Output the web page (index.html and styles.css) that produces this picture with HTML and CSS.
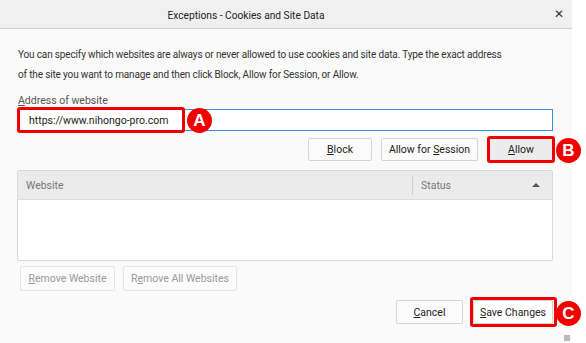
FILE: index.html
```html
<!DOCTYPE html>
<html lang="en">
<head>
  <meta charset="UTF-8">
  <title>Exceptions - Cookies and Site Data</title>
  <link rel="stylesheet" href="styles.css">
</head>
<body>

  <div class="dialog">
    <!-- Title bar -->
    <div class="titlebar">
      <span class="title">Exceptions - Cookies and Site Data</span>
      <span class="close">&#x2715;</span>
    </div>

    <div class="content">
      <p class="intro">You can specify which websites are always or never allowed to use cookies and site data. Type the exact address<br>of the site you want to manage and then click Block, Allow for Session, or Allow.</p>

      <label class="label" for="url"><u>A</u>ddress of website</label>
      <div class="url-field">
        <input id="url" class="url" type="text" value="https://www.nihongo-pro.com">
        <span class="mark mark-a"></span>
        <span class="badge badge-a">A</span>
      </div>

      <!-- Permission buttons -->
      <div class="actions">
        <button class="btn btn-block"><u>B</u>lock</button>
        <button class="btn btn-session">Allow for <u>S</u>ession</button>
        <div class="marked">
          <button class="btn btn-allow"><u>A</u>llow</button>
          <span class="mark mark-b"></span>
          <span class="badge badge-b">B</span>
        </div>
      </div>

      <!-- Site list -->
      <div class="sites">
        <div class="sites-head">
          <span class="col-site">Website</span>
          <span class="col-status">Status</span>
          <span class="sort"></span>
        </div>
        <div class="sites-body"></div>
      </div>

      <div class="remove-row">
        <button class="btn btn-off btn-remove"><u>R</u>emove Website</button>
        <button class="btn btn-off btn-remove-all">R<u>e</u>move All Websites</button>
      </div>

      <!-- Dialog footer -->
      <div class="footer">
        <button class="btn btn-cancel"><u>C</u>ancel</button>
        <div class="marked">
          <button class="btn btn-save"><u>S</u>ave Changes</button>
          <span class="mark mark-c"></span>
          <span class="badge badge-c">C</span>
        </div>
      </div>
    </div>

    <span class="grip"></span>
  </div>

</body>
</html>
```

FILE: styles.css
```css
/* Basic page styles */
body, html {
  margin: 0;
  padding: 0;
  background-color: #ffffff;
  font-family: Roboto, "Open Sans", sans-serif;
  color: #333;
}

/* Dialog window */
.dialog {
  position: relative;
  width: 572px;
  height: 343px;
  background-color: #fafafa;
}

.titlebar {
  height: 28px;
  display: flex;
  align-items: center;
  justify-content: center;
  background-color: #f0f0f0;
  border-bottom: 1px solid #cfcfcf;
  position: relative;
}

.title {
  font-size: 10.2px;
  color: #222;
  margin-left: -80px;
  margin-top: 3px;
}

.close {
  position: absolute;
  right: 8px;
  top: 7px;
  font-size: 12px;
  color: #333;
}

.content {
  padding: 16px 19px 0 17px;
}

.intro {
  margin: 0 0 0 1px;
  font-size: 10px;
  letter-spacing: -0.15px;
  line-height: 20px;
  color: #333;
  white-space: nowrap;
}

.label {
  display: block;
  margin: 9px 0 0 1px;
  font-size: 10.5px;
  line-height: 14px;
  color: #555;
}

/* Address input */
.url-field {
  position: relative;
  margin-top: 1px;
  height: 22px;
}

.url {
  display: block;
  box-sizing: border-box;
  width: 100%;
  height: 22px;
  border: 1px solid #3d8fe0;
  background-color: #fff;
  padding: 0 11px;
  font-family: inherit;
  font-size: 10.5px;
  color: #222;
  outline: none;
}

/* Red highlight boxes */
.mark {
  position: absolute;
  border: 3px solid #f20000;
  border-radius: 3px;
  box-sizing: border-box;
}

.mark-a {
  left: 0;
  top: -2px;
  width: 168px;
  height: 26px;
}

.mark-b {
  left: -2px;
  top: -2px;
  width: 68px;
  height: 27px;
}

.mark-c {
  left: -3px;
  top: -3px;
  width: 87px;
  height: 30px;
}

.badge {
  position: absolute;
  width: 25px;
  height: 25px;
  border-radius: 50%;
  background-color: #f20000;
  color: #fff;
  font-family: "Liberation Sans", Arial, sans-serif;
  font-weight: bold;
  font-size: 17px;
  line-height: 25px;
  text-align: center;
}

.badge-a {
  left: 170px;
  top: -1px;
}

.badge-b {
  left: 67px;
  top: 0;
}

.badge-c {
  left: 83px;
  top: 1px;
}

/* Buttons */
.btn {
  display: block;
  box-sizing: border-box;
  height: 23px;
  padding: 0 4px;
  white-space: nowrap;
  background-color: #fbfbfb;
  border: 1px solid #d4d4d4;
  border-radius: 2px;
  font-family: inherit;
  font-size: 10.5px;
  color: #222;
}

.btn-off {
  color: #9a9a9a;
  border-color: #e4e4e4;
  height: 25px;
}

.marked {
  position: relative;
}

.actions {
  display: flex;
  justify-content: flex-end;
  margin-top: 7px;
}

.btn-block {
  width: 64px;
  margin-right: 9px;
}

.btn-session {
  width: 97px;
  margin-right: 11px;
}

.btn-allow {
  width: 64px;
  background-color: #ececec;
}

/* Site list */
.sites {
  margin-top: 9px;
  height: 91px;
  box-sizing: border-box;
  border: 1px solid #d9d9d9;
  border-radius: 2px;
  background-color: #fff;
  display: flex;
  flex-direction: column;
}

.sites-head {
  height: 28px;
  display: flex;
  align-items: center;
  background-color: #ebebeb;
  border-bottom: 1px solid #dcdcdc;
  font-size: 10.5px;
  color: #777;
}

.col-site {
  flex: 1;
  padding-left: 8px;
}

.col-status {
  box-sizing: border-box;
  width: 120px;
  padding-left: 8px;
  border-left: 1px solid #cfcfcf;
  line-height: 19px;
}

.sort {
  width: 0;
  height: 0;
  border-left: 4px solid transparent;
  border-right: 4px solid transparent;
  border-bottom: 4px solid #555;
  margin-right: 12px;
}

.sites-body {
  flex: 1;
}

.remove-row {
  display: flex;
  gap: 8px;
  margin: 5px 0 0 3px;
}

.btn-remove {
  width: 95px;
}

.btn-remove-all {
  width: 114px;
}

.footer {
  display: flex;
  justify-content: flex-end;
  gap: 10px;
  margin-top: 9px;
}

.btn-cancel {
  width: 67px;
  height: 24px;
}

.btn-save {
  width: 80px;
  height: 24px;
  background-color: #fff;
}

/* Resize grip */
.grip {
  position: absolute;
  right: 2px;
  bottom: 2px;
  width: 6px;
  height: 6px;
  background-image: radial-gradient(#bbb 0.8px, transparent 1px);
  background-size: 2px 2px;
}
```
